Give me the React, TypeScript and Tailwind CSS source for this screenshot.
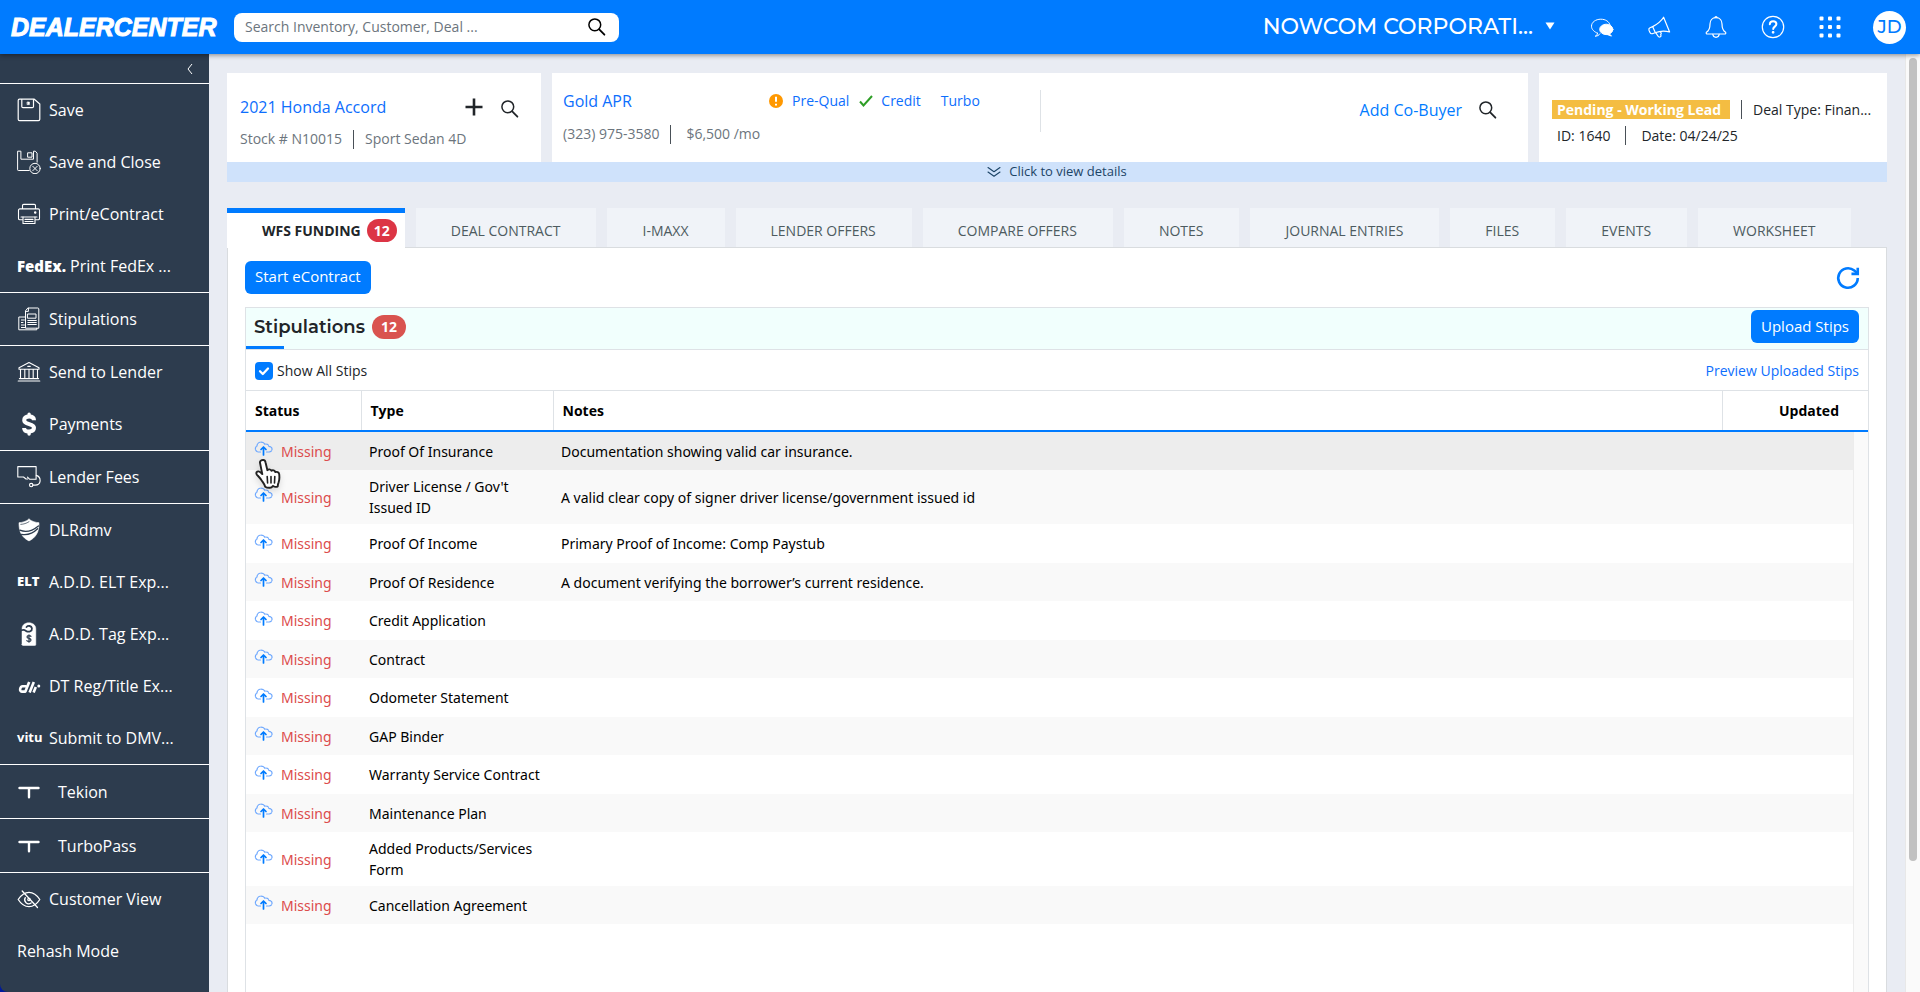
import { ReactNode } from "react";

const OPEN = "font-['Open_Sans','Noto_Sans',sans-serif]";

type NavItem = { label: string; icon?: ReactNode; wide?: boolean };

function Svg({ children, className = "size-6", box = "0 0 24 24", sw = 1.2 }: { children: ReactNode; className?: string; box?: string; sw?: number }) {
  return (
    <svg viewBox={box} className={className} fill="none" stroke="currentColor" strokeWidth={sw} strokeLinejoin="round" strokeLinecap="round" aria-hidden="true">
      {children}
    </svg>
  );
}

const SaveIcon = () => (
  <Svg>
    <path d="M2.5 1.2h14.8L22.8 6v15.3a1.4 1.4 0 0 1-1.4 1.4H2.6a1.4 1.4 0 0 1-1.4-1.4V2.6a1.4 1.4 0 0 1 1.3-1.4Z" />
    <path d="M4.8 1.5v7a1.2 1.2 0 0 0 1.2 1.2h9.3a1.2 1.2 0 0 0 1.2-1.2v-7" />
    <rect x="10.4" y="4" width="2" height="2.6" fill="currentColor" strokeWidth=".6" />
  </Svg>
);

const SaveCloseIcon = () => (
  <Svg sw={1}>
    <path d="M12.2 20.5H1.3a.7.7 0 0 1-.7-.7V1.2h3.3v8h12.6v-8h1.8l1.8 2v9" />
    <path d="M11 2.8h4v4.4h-4z" />
    <circle cx="18" cy="18.5" r="5.2" />
    <path d="m15.8 16.3 4.4 4.4m0-4.4-4.4 4.4" />
  </Svg>
);

const PrinterIcon = () => (
  <Svg sw={1.1}>
    <path d="M5.5 6.8V3.6a1.2 1.2 0 0 1 1.2-1.2h10.6a1.2 1.2 0 0 1 1.2 1.2v3.2M5.5 17.8H2.8a1.3 1.3 0 0 1-1.3-1.3V8.2a1.3 1.3 0 0 1 1.3-1.3h18.4a1.3 1.3 0 0 1 1.3 1.3v8.3a1.3 1.3 0 0 1-1.3 1.3h-2.7M4 15h16" />
    <path d="M6 15v6.5h12V15M8 17.4h8M8 19.5h8" />
    <circle cx="18.2" cy="10.6" r=".7" fill="currentColor" />
  </Svg>
);

const DocsIcon = () => (
  <Svg sw={1}>
    <path d="M11.2 1h9.6a1 1 0 0 1 1 1v19.2H8.5V4.2z" />
    <path d="M8.5 4.4h2.9V1.2M10.8 7h8.2v4.2h-8.2zM10.8 13.5h8.5M10.8 15.5h8.5M10.8 17.5h8.5M8.3 10H1.8v12.8h18v-1.5M4.4 13h3M4.4 15.5H6M4.4 18h3M4.4 20.5H8" />
  </Svg>
);

const BankIcon = () => (
  <Svg sw={1.1}>
    <path d="M2 7.8 12 2.6l10 5.2v1.4H2zM3.5 9.4v9M7.8 9.4v9M12 9.4v9M16.2 9.4v9M20.5 9.4v9M2.4 18.6h19.2M1.2 21h21.6" />
    <path d="M10.8 6.4h2.4" />
  </Svg>
);

const DollarIcon = () => (
  <Svg sw={4}>
    <path d="M17 8.2C17 5.6 14.8 4.6 12.2 4.6S7.2 5.7 7.2 8.2c0 5 9.8 2.8 9.8 7.6 0 2.6-2.3 3.7-4.9 3.7s-5-1.1-5-3.6" strokeLinecap="butt" />
    <path d="M12.1 2.2v1.6M12.1 20.4v1.6" strokeWidth="3.4" />
  </Svg>
);

const FeesIcon = () => (
  <Svg sw={1.1}>
    <path d="M10.6 14H9L6.5 12H.8V1.6h18.3v12.6h-6.6l-2-2" />
    <path d="M19.3 10.4c2.4.7 4 3.1 3.8 5.7-.3 2.6-2.7 4-5 4h-2.4" />
    <circle cx="14.2" cy="20.1" r="1.7" />
  </Svg>
);

const ShieldIcon = () => (
  <Svg>
    <path d="M12 1.2c3.4 2.4 6.2 3.2 10 3.5 0 4.6-.5 8.4-2.6 11.8-1.8 2.9-4.2 4.9-7.4 6.4-3.2-1.5-5.6-3.5-7.4-6.4C2.5 13.1 2 9.3 2 4.7c3.8-.3 6.6-1.1 10-3.5Z" fill="currentColor" strokeWidth=".6" />
    <path d="M2.8 12.2c6.5 2.6 12.8.6 18.6-4.2M4.6 16.4c6 1 11.6-1.2 16-5.6" stroke="#2d3c4e" strokeWidth="1.3" />
    <path d="M3.8 6.4c3-.2 5.6-1 8.2-2.7" stroke="#2d3c4e" strokeWidth=".7" />
  </Svg>
);

const TagIcon = () => (
  <Svg>
    <path d="M5 22.5V6.8C5 3 8 .8 11.8.8S18.8 3 18.8 6.8v15.7a1 1 0 0 1-1 1H6a1 1 0 0 1-1-1Z" fill="currentColor" strokeWidth=".5" />
    <path d="M4.5 8.3c1.8-1 3.5-.2 4.7.8 3 1.5 6-.1 5.7-2.8-.5-2.5-3.6-3.2-5.4-1.3" stroke="#2d3c4e" strokeWidth="1.8" />
    <path d="M14 14.3c-.6-.8-4-1.2-4 .7s4 .9 4 2.9-3.4 1.7-4.2.7M12 12.8v7.4" stroke="#2d3c4e" strokeWidth="1.2" />
  </Svg>
);

const DtIcon = () => (
  <Svg sw={2.6}>
    <path d="M9.3 12.2H5.6c-2.6 0-3.6 5.4-.8 5.4h3.6L12.2 8M12.6 18.4 16.8 8M16.6 18.4l2.2-5.4" strokeLinecap="butt" />
    <circle cx="21.8" cy="12" r=".7" fill="currentColor" strokeWidth="1.6" />
  </Svg>
);

const TIcon = () => (
  <Svg sw={2.4}>
    <path d="M2.5 8h19M12 8v9.2" />
    <path d="M9.8 8.3c1.5 0 2.2.8 2.2 2.2 0-1.4.7-2.2 2.2-2.2" strokeWidth="1" />
  </Svg>
);

const EyeOffIcon = () => (
  <Svg sw={1.3}>
    <path d="M1.2 12.5C4.3 7.6 8 5.3 12 5.3s7.7 2.3 10.8 7.2c-3.1 4.9-6.8 7.2-10.8 7.2s-7.7-2.3-10.8-7.2Z" />
    <path d="M8.3 10.6a4 4 0 0 0 5.8 5.3M5.2 4 20.5 20.5" />
    <circle cx="12" cy="12.5" r="1.2" />
  </Svg>
);

const SearchIcon = () => (
  <Svg box="0 0 20 20" className="size-5" sw={1.5}>
    <circle cx="7.8" cy="7.8" r="5.9" />
    <path d="m12.2 12.3 5.2 5.4" strokeWidth="1.8" />
  </Svg>
);

const ChatIcon = () => (
  <Svg sw={1}>
    <path d="M7.5 18.2C4.3 16.9 1.5 14.5 1.5 11.2c0-4 4.2-7 9.3-7 4.7 0 8.3 2.3 9.2 5.7M7.5 18.2c0 1.7-1.2 2.6-2.3 3 2 0 3.7-.8 4.7-2.4" />
    <ellipse cx="16.3" cy="14.4" rx="6.6" ry="5.2" fill="currentColor" />
    <path d="m19 18.5 2.5 2.6-5-1.8z" fill="currentColor" />
  </Svg>
);

const MegaphoneIcon = () => (
  <Svg>
    <path d="M16.6 2.2 22.6 17c-5.4-1.6-9.6-1.2-14.6.8l-2.6.9c-1 .2-2-.3-2.4-1.2l-1-2.2c-.4-1 0-2 1-2.5l2.7-1.2C10.5 9 14 6.5 16.6 2.2Z" />
    <path d="m5.700 11.700 2.700 6M8.700 17.700l2.600 3.800c.6.9 2.200.6 2.600-.3.3-.7-.3-1.100-.1-1.700.1-.6.7-.8.4-1.500l-1-1.300" />
  </Svg>
);

const BellIcon = () => (
  <Svg>
    <path d="M12 2.6c-4 0-6 3-6 6.4 0 4.6-1 6.8-3.6 8.2-.6 1.2.2 1.8 1 1.8h17.2c.8 0 1.6-.6 1-1.8C19 15.8 18 13.6 18 9c0-3.4-2-6.4-6-6.4Z" />
    <path d="M8.8 19.3c.2 1.8 1.500 3 3.200 3s3-1.200 3.200-3M11 2.600c0-1.300 2-1.300 2 0" />
  </Svg>
);

const HelpIcon = () => (
  <Svg>
    <circle cx="12" cy="12" r="10.7" />
    <path d="M8.8 9.2c.1-2 1.500-3 3.300-3s3.300 1.100 3.300 2.900c0 2.500-3.200 2.600-3.200 5" strokeWidth="2" />
    <circle cx="12.1" cy="17.3" r=".8" fill="currentColor" />
  </Svg>
);

const GridIcon = () => (
  <Svg>
    {[3.5, 12, 20.5].map((y) => [3.5, 12, 20.5].map((x) => <rect key={`${x}-${y}`} x={x - 2} y={y - 2} width="4" height="4" rx="1" fill="currentColor" stroke="none" />))}
  </Svg>
);

const UploadIcon = () => (
  <svg viewBox="0 0 19 16" className="h-4 w-[19px] shrink-0" fill="none" strokeLinecap="round" strokeLinejoin="round" aria-hidden="true">
    <path d="M6.500 11H4.200A3.300 3.300 0 0 1 3 4.900C3 2.600 4.900 1.100 7 1.100c1.800 0 3.100.9 3.700 2.100 2-.7 3.900.4 4.200 2.200 1.700 0 3.100 1.100 3.100 2.800S16.700 11 15 11h-2.500" stroke="#6ea8fe" strokeWidth="1.200" strokeDasharray="2.200 1" />
    <path d="M9.500 14V6.300M7 8.500l2.500-2.500L12 8.500" stroke="#007bff" strokeWidth="1.700" />
  </svg>
);

const HandCursor = () => (
  <svg viewBox="0 0 28 32" className="pointer-events-none absolute top-[26px] left-2 z-10 h-8 w-7 drop-shadow-md" aria-hidden="true">
    <path d="M8.500 2c1.600-.3 2.700.6 3 2.200l1.900 8c.9-1.300 3.500-1 4 .6 1.300-1 3.400-.3 3.800 1.300 1.600-.7 3.700.2 4 2 .4 3.500.5 5.500-.6 8.200-.8 1.800-.8 2.700-.9 4.200-1.300.8-3.800.3-4.700-.6-.8 1.100-1.800 1.900-3 1.900-1.800.1-3.700-.2-4.800-1-.6-2.800-2.200-4.300-3.700-6.600-1.200-1.900-3-3.700-4.500-5.400-1.500-1.800-.2-3.700 1.700-3.400 1.500.3 2.500 1.400 3.600 2.700L6 4.800C5.700 3.400 7 2.200 8.500 2Z" fill="#fff" stroke="#222" strokeWidth="1.900" strokeLinejoin="round" />
    <path d="M13.200 18.500l.4 6.500M17 18.500v6.500M20.800 18.500l-.3 6.500" stroke="#222" strokeWidth="1.600" strokeLinecap="round" />
  </svg>
);

const groups: NavItem[][] = [
  [
    { label: "Save", icon: <SaveIcon /> },
    { label: "Save and Close", icon: <SaveCloseIcon /> },
    { label: "Print/eContract", icon: <PrinterIcon /> },
    { label: "Print FedEx ...", icon: <span className="-mr-1 text-[15px] font-extrabold">FedEx.</span> },
  ],
  [{ label: "Stipulations", icon: <DocsIcon /> }],
  [
    { label: "Send to Lender", icon: <BankIcon /> },
    { label: "Payments", icon: <DollarIcon /> },
  ],
  [{ label: "Lender Fees", icon: <FeesIcon /> }],
  [
    { label: "DLRdmv", icon: <ShieldIcon /> },
    { label: "A.D.D. ELT Exp...", icon: <span className="w-6 text-[13px] font-extrabold">ELT</span> },
    { label: "A.D.D. Tag Exp...", icon: <TagIcon /> },
    { label: "DT Reg/Title Ex...", icon: <DtIcon /> },
    { label: "Submit to DMV...", icon: <span className="w-6 text-[13px] font-bold">vitu</span> },
  ],
  [{ label: "Tekion", icon: <TIcon />, wide: true }],
  [{ label: "TurboPass", icon: <TIcon />, wide: true }],
  [{ label: "Customer View", icon: <EyeOffIcon /> }, { label: "Rehash Mode" }],
];

const tabs = ["DEAL CONTRACT", "I-MAXX", "LENDER OFFERS", "COMPARE OFFERS", "NOTES", "JOURNAL ENTRIES", "FILES", "EVENTS", "WORKSHEET"];

const stips: [string, string][] = [
  ["Proof Of Insurance", "Documentation showing valid car insurance."],
  ["Driver License / Gov't Issued ID", "A valid clear copy of signer driver license/government issued id"],
  ["Proof Of Income", "Primary Proof of Income: Comp Paystub"],
  ["Proof Of Residence", "A document verifying the borrower’s current residence."],
  ["Credit Application", ""],
  ["Contract", ""],
  ["Odometer Statement", ""],
  ["GAP Binder", ""],
  ["Warranty Service Contract", ""],
  ["Maintenance Plan", ""],
  ["Added Products/Services Form", ""],
  ["Cancellation Agreement", ""],
];

function Header() {
  return (
    <header className="relative z-20 flex h-[54px] shrink-0 items-center bg-[#007bff] pr-3.5 pl-[11px] text-white shadow-[0_1px_5px_rgba(0,0,0,0.45)]">
      <a href="#" className="w-[223px] font-['Liberation_Sans',Arial,sans-serif] text-[25px] leading-9 font-bold whitespace-nowrap italic [-webkit-text-stroke:1px_white]">DEALERCENTER</a>
      <div className="flex h-[29px] w-[385px] items-center rounded-lg bg-white pr-3 pl-[11px] text-black">
        <input type="text" aria-label="Search" placeholder="Search Inventory, Customer, Deal ..." className="min-w-0 flex-1 text-sm outline-none placeholder:text-[#6c757d]" />
        <button aria-label="Run search"><SearchIcon /></button>
      </div>
      <div className="ml-auto flex items-center">
        <button className="flex items-center gap-3 pb-0.5 font-['Montserrat','Inter',sans-serif] text-[22px] font-medium">
          NOWCOM CORPORATI...
          <svg viewBox="0 0 10 8" className="h-2 w-2.5" fill="currentColor" aria-hidden="true"><path d="M.5.5h9L5 7.500z" /></svg>
        </button>
        <div className="ml-[35px] flex items-center gap-[33px]">
          <button aria-label="Messages"><ChatIcon /></button>
          <button aria-label="Announcements"><MegaphoneIcon /></button>
          <button aria-label="Notifications"><BellIcon /></button>
          <button aria-label="Help"><HelpIcon /></button>
          <button aria-label="Apps"><GridIcon /></button>
        </div>
        <button className="ml-[31px] size-[33px] rounded-full bg-white font-['Montserrat','Inter',sans-serif] text-lg leading-none font-medium text-[#007bff]">JD</button>
      </div>
    </header>
  );
}

function Sidebar() {
  return (
    <nav className="w-[209px] shrink-0 overflow-hidden rounded-bl-lg bg-[#2d3c4e] text-base text-white">
      <div className="flex h-[29px] items-center justify-end pr-4">
        <button aria-label="Collapse menu">
          <svg viewBox="0 0 6 12" className="h-3 w-1.5" fill="none" stroke="currentColor" aria-hidden="true"><path d="M5 1 1 6l4 5" /></svg>
        </button>
      </div>
      {groups.map((g, i) => (
        <div key={i} className="border-t border-white">
          {g.map((item) => (
            <a key={item.label} href="#" className={item.wide ? "flex h-[53px] items-center gap-[17px] pl-[17px]" : "flex h-[52px] items-center gap-2 pl-[17px]"}>
              {item.icon}
              <span className="whitespace-nowrap">{item.label}</span>
            </a>
          ))}
        </div>
      ))}
    </nav>
  );
}

const Divider = ({ className = "mx-[11px]" }: { className?: string }) => <span className={`${className} h-[19px] w-px shrink-0 bg-[#495057]`} />;

function Summary() {
  return (
    <section>
      <div className="flex h-[89px] gap-[11px]">
        <div className="w-[314px] shrink-0 bg-white pt-[22px] pr-[21px] pl-[13px]">
          <div className="flex h-6 items-center">
            <a href="#" className="text-base text-[#0d6efd]">2021 Honda Accord</a>
            <button aria-label="Add vehicle" className="ml-auto text-[#212529]"><Svg box="0 0 20 20" className="size-5" sw={2.6}><path d="M10 1.500v17M1.500 10h17" strokeLinecap="butt" /></Svg></button>
            <button aria-label="Find vehicle" className="ml-4 pt-1 text-[#212529]"><SearchIcon /></button>
          </div>
          <div className="mt-2 flex h-6 items-center text-sm text-[#6c757d]">Stock # N10015<Divider /> Sport Sedan 4D</div>
        </div>
        <div className="flex flex-1 bg-white pr-[30px] pl-[11px]">
          <div className="w-[477px] shrink-0 pt-4">
            <div className="flex h-6 items-center text-sm">
              <a href="#" className="w-[206px] text-base text-[#0d6efd]">Gold APR</a>
              <svg viewBox="0 0 14 14" className="mr-[9px] size-3.5" aria-hidden="true"><circle cx="7" cy="7" r="7" fill="#ff9800" /><path d="M7 2.800v5M7 9.800v1.600" stroke="#fff" strokeWidth="2" /></svg>
              <a href="#" className="text-[#0d6efd]">Pre-Qual</a>
              <svg viewBox="0 0 14 12" className="mr-2 ml-[10px] h-3 w-3.5" fill="none" stroke="#2e9e26" strokeWidth="2" aria-hidden="true"><path d="m1 6.500 3.500 4L13 1" /></svg>
              <a href="#" className="text-[#0d6efd]">Credit</a>
              <a href="#" className="ml-5 text-[#0d6efd]">Turbo</a>
            </div>
            <div className="mt-[9px] flex h-6 items-center text-sm text-[#6c757d]">(323) 975-3580<Divider className="mr-[15px] ml-[11px]" />$6,500 /mo</div>
          </div>
          <div className="mt-[17px] h-[42px] w-px bg-[#dee2e6]" />
          <div className="ml-auto flex h-[74px] items-center gap-4">
            <a href="#" className="text-base text-[#007bff]">Add Co-Buyer</a>
            <button aria-label="Find co-buyer" className="text-[#212529]"><SearchIcon /></button>
          </div>
        </div>
        <div className="w-[348px] shrink-0 bg-white px-[13px] pt-6 text-sm text-[#212529]">
          <div className="flex h-[25px] items-center whitespace-nowrap">
            <span className="bg-[#f4bd42] pr-[9px] pl-[5px] leading-[19px] font-bold text-white">Pending - Working Lead</span>
            <Divider />Deal Type: Finan...
          </div>
          <div className="flex h-[27px] items-center pl-[5px]">ID: 1640<Divider className="mx-[15px]" />Date: 04/24/25</div>
        </div>
      </div>
      <button className="flex h-5 w-full items-center justify-center gap-2 bg-[#cfe2fb] pb-px text-[13px] text-[#1c4466]">
        <Svg box="0 0 14 12" className="h-3 w-3.5" sw={1.1}><path d="m1 1.500 6 4.300 6-4.300M1 6l6 4.300L13 6" /></Svg>
        Click to view details
      </button>
    </section>
  );
}

function StipTable() {
  return (
    <table className="w-full table-fixed border-collapse text-sm leading-[21px] text-black">
      <colgroup>
        <col className="w-[115px]" />
        <col className="w-[192px]" />
        <col />
        <col className="w-[131px]" />
        <col className="w-[15px]" />
      </colgroup>
      <thead>
        <tr className="h-10 border-b-2 border-[#007bff] text-left">
          <th className="border-r border-[#dee2e6] px-[9px] font-bold">Status</th>
          <th className="border-r border-[#dee2e6] px-[9px] font-bold">Type</th>
          <th className="border-r border-[#dee2e6] px-[9px] font-bold">Notes</th>
          <th colSpan={2} className="pr-[29px] text-right font-bold">Updated</th>
        </tr>
      </thead>
      <tbody className="font-['Noto_Sans','Open_Sans',sans-serif]">
        {stips.map(([type, note], i) => (
          <tr key={type} className={i === 0 ? "h-[39px] bg-[#ededed]" : i % 2 ? "h-[38px] bg-[#f9f9f9]" : "h-[39px] bg-white"}>
            <td className="relative pl-2">
              <div className="flex items-center gap-2 text-[#dc4c4c]">
                <button aria-label={`Upload ${type}`} className="pb-1"><UploadIcon /></button>
                Missing
              </div>
              {i === 0 && <HandCursor />}
            </td>
            <td className="px-2 py-1.5">{type}</td>
            <td className="px-2">{note}</td>
            <td />
            <td className="border-l border-[#ececec] bg-[#fafafa]" />
          </tr>
        ))}
      </tbody>
    </table>
  );
}

export default function App() {
  return (
    <div className={`flex h-screen flex-col overflow-hidden bg-[#e9ecf3] ${OPEN}`}>
      <Header />
      <div className="flex min-h-0 flex-1">
        <div className="flex shrink-0 bg-[#001a9c]"><Sidebar /></div>
        <main className="flex min-w-0 flex-1 flex-col px-[18px] pt-[19px]">
          <Summary />
          <div className="relative z-10 mt-[26px] -mb-px flex h-10 gap-[11px] text-sm" role="tablist">
            <button role="tab" aria-selected="true" className="flex items-center gap-1.5 border-t-[5px] border-[#007bff] bg-white pr-2 pl-[35px] font-bold text-[#212529]">
              WFS FUNDING
              <span className="rounded-full bg-[#dc3545] px-[7px] leading-[23px] text-white">12</span>
            </button>
            {tabs.map((t) => (
              <button key={t} role="tab" aria-selected="false" className="mb-px bg-[#f0f3f8] pt-[7px] pr-9 pl-[35px] text-[#4d5b60]">{t}</button>
            ))}
          </div>
          <section className="flex min-h-0 flex-1 flex-col border border-b-0 border-[#d9dcdf] bg-white px-[17px] pt-[13px]">
            <div className="flex h-[33px] items-center justify-between pr-2">
              <button className="h-[33px] rounded-md bg-[#007bff] px-2.5 pb-0.5 text-[15px] font-medium text-white">Start eContract</button>
              <button aria-label="Refresh" className="text-[#007bff]">
                <Svg box="0 0 24 24" className="size-[26px]" sw={2.4}><path d="M21 12a9 9 0 1 1-3.200-6.900L20.600 7.500" strokeLinecap="butt" /><path d="M21 2.500V8.200H15.200" strokeLinecap="butt" strokeLinejoin="miter" /></Svg>
              </button>
            </div>
            <div className="mt-[13px] flex min-h-0 flex-1 flex-col border border-b-0 border-[#dee2e6]">
              <div className="flex h-[42px] items-center justify-between border-b border-[#dee2e6] bg-[#f1fffd] pr-[9px]">
                <div className="flex h-full flex-col">
                  <h2 className="flex flex-1 items-center gap-[7px] pl-2 font-['Montserrat','Inter',sans-serif] text-lg leading-none font-semibold text-[#212529]">
                    Stipulations
                    <span className="rounded-full bg-[#d9534f] px-[9px] font-['Open_Sans'] text-sm leading-6 font-bold text-white">12</span>
                  </h2>
                  <div className="h-[3px] w-[38px] bg-[#007bff]" />
                </div>
                <button className="mb-1 h-[33px] rounded-md bg-[#007bff] px-2.5 pb-px text-[15px] font-medium text-white">Upload Stips</button>
              </div>
              <div className="flex h-[41px] items-center justify-between border-b border-[#dee2e6] px-[9px] pt-0.5 text-sm">
                <label className="flex items-center gap-1 text-[#212529]">
                  <span className="relative flex">
                    <input type="checkbox" defaultChecked className="size-[18px] appearance-none rounded bg-[#007bff]" />
                    <Svg box="0 0 18 18" className="pointer-events-none absolute inset-0 size-[18px] text-white" sw={2.3}><path d="m5 9.200 2.800 2.800L13 6.500" /></Svg>
                  </span>
                  Show All Stips
                </label>
                <a href="#" className="text-[#0d6efd]">Preview Uploaded Stips</a>
              </div>
              <StipTable />
              <div className="flex flex-1 justify-end"><div className="w-[15px] border-l border-[#ececec] bg-[#fafafa]" /></div>
            </div>
          </section>
        </main>
        <div className="w-[15px] shrink-0 border-l border-[#e8e8e8] bg-[#fafafa] px-[3px] pt-1">
          <div className="h-[86%] w-2 rounded-full bg-[#c1c1c1]" />
        </div>
      </div>
    </div>
  );
}
